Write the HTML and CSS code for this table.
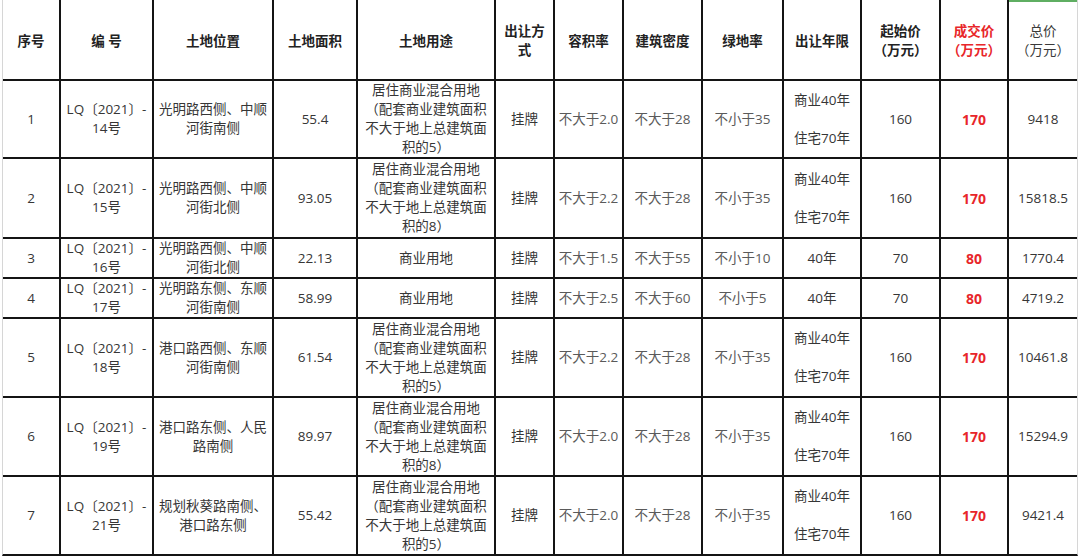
FILE: index.html
```html
<!DOCTYPE html>
<html lang="zh-CN">
<head>
<meta charset="utf-8">
<title>土地出让结果</title>
<link rel="stylesheet" href="styles.css">
</head>
<body>
<div class="sheet">
  <div class="grid">
    <div class="c h">序号</div>
    <div class="c h">编 号</div>
    <div class="c h">土地位置</div>
    <div class="c h">土地面积</div>
    <div class="c h">土地用途</div>
    <div class="c h">出让方<br>式</div>
    <div class="c h">容积率</div>
    <div class="c h">建筑密度</div>
    <div class="c h">绿地率</div>
    <div class="c h">出让年限</div>
    <div class="c h">起始价<br>（万元）</div>
    <div class="c h red">成交价<br>（万元）</div>
    <div class="c h plain sel">总价<br>（万元）</div>

    <div class="c">1</div>
    <div class="c">LQ〔2021〕-<br>14号</div>
    <div class="c">光明路西侧、中顺<br>河街南侧</div>
    <div class="c">55.4</div>
    <div class="c">居住商业混合用地<br>（配套商业建筑面积<br>不大于地上总建筑面<br>积的5）</div>
    <div class="c">挂牌</div>
    <div class="c lt">不大于2.0</div>
    <div class="c lt">不大于28</div>
    <div class="c lt">不小于35</div>
    <div class="c">商业40年<br><br>住宅70年</div>
    <div class="c">160</div>
    <div class="c deal">170</div>
    <div class="c">9418</div>

    <div class="c">2</div>
    <div class="c">LQ〔2021〕-<br>15号</div>
    <div class="c">光明路西侧、中顺<br>河街北侧</div>
    <div class="c">93.05</div>
    <div class="c">居住商业混合用地<br>（配套商业建筑面积<br>不大于地上总建筑面<br>积的8）</div>
    <div class="c">挂牌</div>
    <div class="c lt">不大于2.2</div>
    <div class="c lt">不大于28</div>
    <div class="c lt">不小于35</div>
    <div class="c">商业40年<br><br>住宅70年</div>
    <div class="c">160</div>
    <div class="c deal">170</div>
    <div class="c">15818.5</div>

    <div class="c">3</div>
    <div class="c">LQ〔2021〕-<br>16号</div>
    <div class="c">光明路西侧、中顺<br>河街北侧</div>
    <div class="c">22.13</div>
    <div class="c">商业用地</div>
    <div class="c">挂牌</div>
    <div class="c lt">不大于1.5</div>
    <div class="c lt">不大于55</div>
    <div class="c lt">不小于10</div>
    <div class="c">40年</div>
    <div class="c">70</div>
    <div class="c deal">80</div>
    <div class="c">1770.4</div>

    <div class="c">4</div>
    <div class="c">LQ〔2021〕-<br>17号</div>
    <div class="c">光明路东侧、东顺<br>河街南侧</div>
    <div class="c">58.99</div>
    <div class="c">商业用地</div>
    <div class="c">挂牌</div>
    <div class="c lt">不大于2.5</div>
    <div class="c lt">不大于60</div>
    <div class="c lt">不小于5</div>
    <div class="c">40年</div>
    <div class="c">70</div>
    <div class="c deal">80</div>
    <div class="c">4719.2</div>

    <div class="c">5</div>
    <div class="c">LQ〔2021〕-<br>18号</div>
    <div class="c">港口路西侧、东顺<br>河街南侧</div>
    <div class="c">61.54</div>
    <div class="c">居住商业混合用地<br>（配套商业建筑面积<br>不大于地上总建筑面<br>积的5）</div>
    <div class="c">挂牌</div>
    <div class="c lt">不大于2.2</div>
    <div class="c lt">不大于28</div>
    <div class="c lt">不小于35</div>
    <div class="c">商业40年<br><br>住宅70年</div>
    <div class="c">160</div>
    <div class="c deal">170</div>
    <div class="c">10461.8</div>

    <div class="c">6</div>
    <div class="c">LQ〔2021〕-<br>19号</div>
    <div class="c">港口路东侧、人民<br>路南侧</div>
    <div class="c">89.97</div>
    <div class="c">居住商业混合用地<br>（配套商业建筑面积<br>不大于地上总建筑面<br>积的8）</div>
    <div class="c">挂牌</div>
    <div class="c lt">不大于2.0</div>
    <div class="c lt">不大于28</div>
    <div class="c lt">不小于35</div>
    <div class="c">商业40年<br><br>住宅70年</div>
    <div class="c">160</div>
    <div class="c deal">170</div>
    <div class="c">15294.9</div>

    <div class="c">7</div>
    <div class="c">LQ〔2021〕-<br>21号</div>
    <div class="c">规划秋葵路南侧、<br>港口路东侧</div>
    <div class="c">55.42</div>
    <div class="c">居住商业混合用地<br>（配套商业建筑面积<br>不大于地上总建筑面<br>积的5）</div>
    <div class="c">挂牌</div>
    <div class="c lt">不大于2.0</div>
    <div class="c lt">不大于28</div>
    <div class="c lt">不小于35</div>
    <div class="c">商业40年<br><br>住宅70年</div>
    <div class="c">160</div>
    <div class="c deal">170</div>
    <div class="c">9421.4</div>
  </div>
</div>
</body>
</html>
```

FILE: styles.css
```css
html, body {
  margin: 0;
  padding: 0;
  background: #ffffff;
}

.sheet {
  padding-left: 2px;
}

.grid {
  display: grid;
  width: max-content;
  grid-template-columns: 56px 91px 118px 82px 136px 57px 67px 77px 79px 76px 77px 66px 68px;
  grid-template-rows: 79px 76px 78px 38px 38px 77px 77px 77px;
  gap: 2px;
  background: #141414;
  border-left: 1px solid #d6d6d6;
  border-right: 1px solid #d6d6d6;
  border-bottom: 2px solid #141414;
}

.c {
  background: #ffffff;
  display: flex;
  align-items: center;
  justify-content: center;
  text-align: center;
  white-space: nowrap;
  font-family: "Open Sans", "Noto Sans CJK SC", sans-serif;
  font-size: 13.5px;
  line-height: 19px;
  color: #363636;
  text-spacing-trim: space-all;
}

.h {
  font-weight: bold;
  color: #222222;
  padding-top: 3px;
}

.h.plain {
  font-weight: normal;
  color: #3a3a3a;
}

.h.red {
  color: #e8262a;
}

.sel {
  box-shadow: inset 0 2px 0 #5fae62;
}

.lt {
  color: #5a5a5a;
}

.deal {
  color: #e8262a;
  font-weight: bold;
  font-size: 14px;
}
```
